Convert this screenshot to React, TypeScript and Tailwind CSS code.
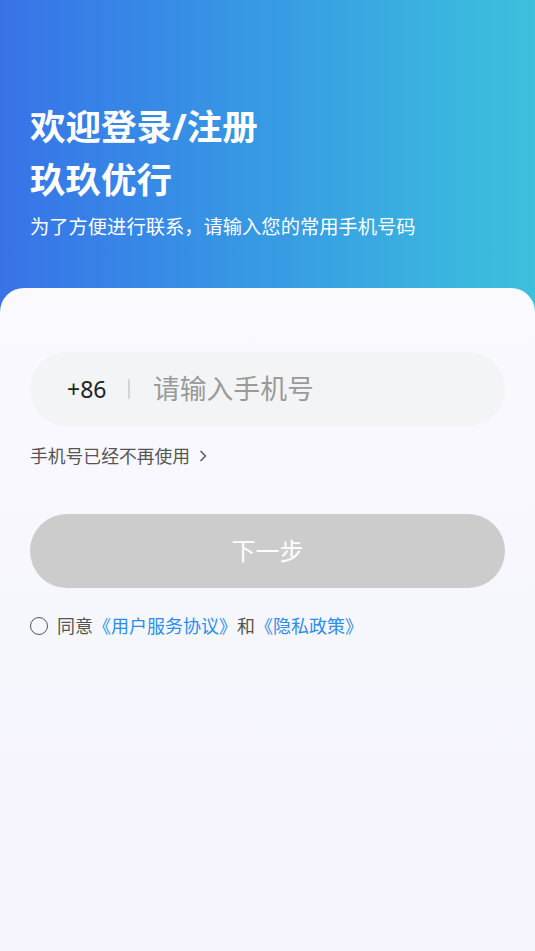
import React, { useState } from 'react'

const font = { fontFamily: '"Noto Sans", "Noto Sans CJK SC", sans-serif' }

const App = () => {
    const [phone, setPhone] = useState('')
    const [agreed, setAgreed] = useState(false)

    return (
        <div
            className="w-[535px] h-[951px] overflow-hidden bg-gradient-to-r from-[#3872e8] to-[#3dc0dc]"
            style={font}
        >
            {/* header */}
            <div className="h-[288px] px-[30px] pt-[100px] text-white">
                <h1 className="text-[35.5px] leading-[53px] font-bold">
                    欢迎登录/注册
                    <br />
                    玖玖优行
                </h1>
                <p className="mt-[8px] text-[19.3px] leading-[26px]">
                    为了方便进行联系，请输入您的常用手机号码
                </p>
            </div>

            {/* card */}
            <div className="h-[663px] rounded-t-[24px] bg-gradient-to-b from-[#f9f9fe] to-[#f5f4fd] px-[30px] pt-[64px]">
                <div className="flex items-center h-[74px] rounded-full bg-[#f3f4f5] pl-[37px] pr-6">
                    <span className="text-[23px] text-[#222]">+86</span>
                    <span className="shrink-0 ml-[22px] mr-[23px] h-[20px] w-[1.5px] bg-[#d4d4d4]" />
                    <input
                        value={phone}
                        onChange={(e) => setPhone(e.target.value)}
                        placeholder="请输入手机号"
                        className="flex-1 min-w-0 bg-transparent outline-none text-[26.8px] text-[#333] placeholder:text-[#9a9a9a]"
                    />
                </div>

                <div className="mt-[17px] flex items-center gap-[8px] text-[17.8px] text-[#555]">
                    手机号已经不再使用
                    <svg width="10" height="14" viewBox="0 0 10 14" fill="none">
                        <path d="M2.5 2l5 5-5 5" stroke="#555" strokeWidth="1.4" />
                    </svg>
                </div>

                <button className="mt-[44px] w-full h-[74px] rounded-full bg-[#cccccc] text-white text-[24px]">
                    下一步
                </button>

                <div className="mt-[25px] flex items-center text-[18px] text-[#555]">
                    <button
                        onClick={() => setAgreed(!agreed)}
                        className={`w-[18px] h-[18px] rounded-full border-[1.5px] border-[#555] mr-[9px] ${agreed ? 'bg-[#2b8df0]' : ''}`}
                    />
                    同意
                    <span className="text-[#2b8df0]">《用户服务协议》</span>
                    和
                    <span className="text-[#2b8df0]">《隐私政策》</span>
                </div>
            </div>
        </div>
    )
}

export default App
